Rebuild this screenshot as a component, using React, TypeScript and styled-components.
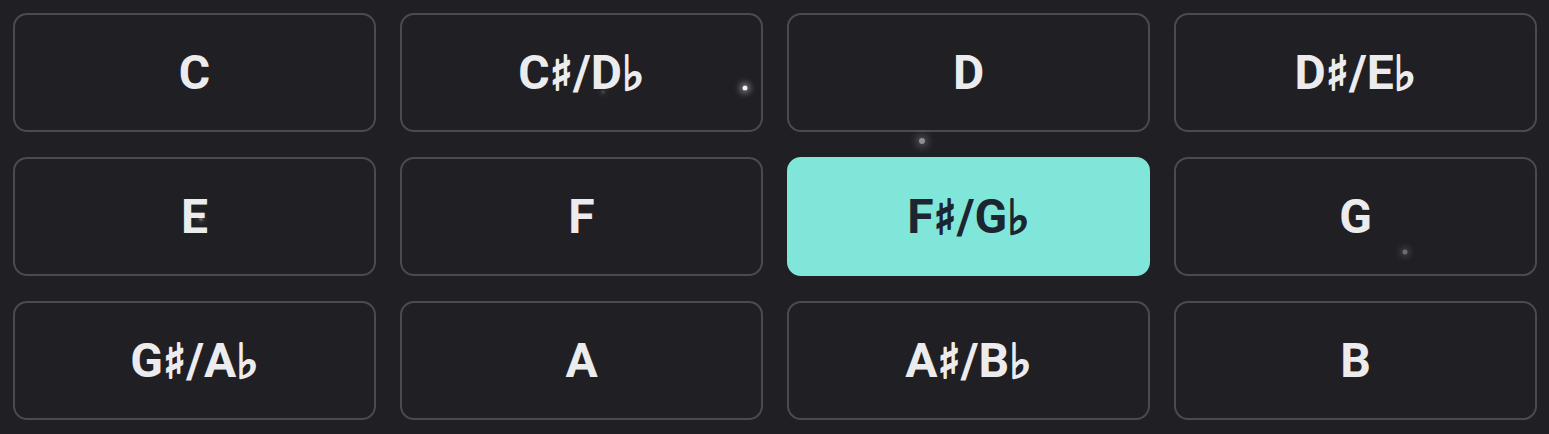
import React, { useState } from "react";
import styled, { createGlobalStyle } from "styled-components";

const GlobalStyle = createGlobalStyle`
  html, body {
    margin: 0;
    padding: 0;
    background: #1f1f24;
  }
  body {
    font-family: Roboto, "DejaVu Sans", sans-serif;
  }
`;

const Board = styled.div`
  position: relative;
  box-sizing: border-box;
  width: 1549px;
  height: 434px;
  padding: 13px 12px 14px 13px;
  display: grid;
  grid-template-columns: repeat(4, 1fr);
  grid-template-rows: repeat(3, 1fr);
  column-gap: 24px;
  row-gap: 25px;
  background: #1f1f24;
`;

const NoteButton = styled.button<{ $active?: boolean }>`
  box-sizing: border-box;
  border-radius: 14px;
  border: 2px solid ${(p) => (p.$active ? "#80e6da" : "#4a4a50")};
  background: ${(p) => (p.$active ? "#80e6da" : "#1f1f24")};
  color: ${(p) => (p.$active ? "#1d2630" : "#ececee")};
  font-family: Roboto, "DejaVu Sans", sans-serif;
  font-weight: 700;
  font-size: 48px;
  display: flex;
  align-items: center;
  justify-content: center;
  cursor: pointer;
  padding: 0;
  outline: none;
`;

const Accidental = styled.span`
  font-family: "DejaVu Sans", sans-serif;
  -webkit-text-stroke: 2px currentColor;
`;

const Spark = styled.span<{ $size: number; $alpha: number }>`
  position: absolute;
  width: ${(p) => p.$size}px;
  height: ${(p) => p.$size}px;
  border-radius: 50%;
  background: rgba(255, 255, 255, ${(p) => p.$alpha});
  box-shadow: 0 0 ${(p) => p.$size * 1.4}px ${(p) => p.$size * 0.4}px
    rgba(255, 255, 255, ${(p) => p.$alpha * 0.6});
  transform: translate(-50%, -50%);
  pointer-events: none;
`;

const notes = [
  "C", "C♯/D♭", "D", "D♯/E♭",
  "E", "F", "F♯/G♭", "G",
  "G♯/A♭", "A", "A♯/B♭", "B",
];

const sparks = [
  { x: 745, y: 88, size: 5, alpha: 0.95 },
  { x: 922, y: 141, size: 6, alpha: 0.5 },
  { x: 1405, y: 252, size: 5, alpha: 0.35 },
  { x: 201, y: 219, size: 4, alpha: 0.3 },
  { x: 603, y: 92, size: 4, alpha: 0.15 },
];

// wrap ♯ and ♭ so they can get a heavier stroke than the fallback font gives
const renderLabel = (label: string) =>
  label.split(/([♯♭])/).map((part, i) =>
    part === "♯" || part === "♭" ? <Accidental key={i}>{part}</Accidental> : part
  );

export default function App() {
  const [active, setActive] = useState("F♯/G♭");
  return (
    <>
      <GlobalStyle />
      <Board>
        {notes.map((n) => (
          <NoteButton key={n} $active={n === active} onClick={() => setActive(n)}>
            {renderLabel(n)}
          </NoteButton>
        ))}
        {sparks.map((s, i) => (
          <Spark key={i} $size={s.size} $alpha={s.alpha} style={{ left: s.x, top: s.y }} />
        ))}
      </Board>
    </>
  );
}
